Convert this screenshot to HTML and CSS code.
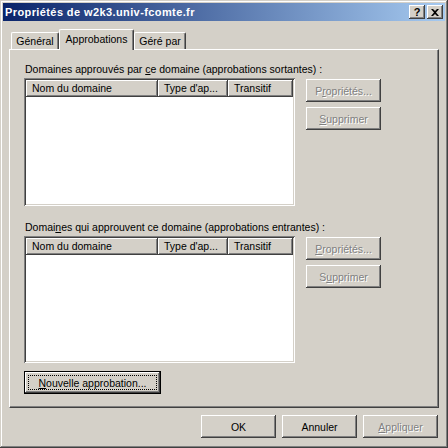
FILE: index.html
```html
<!DOCTYPE html>
<html lang="fr">
<head>
  <meta charset="UTF-8">
  <title>Propriétés de w2k3.univ-fcomte.fr</title>
  <link rel="stylesheet" href="styles.css">
</head>
<body>
  <div class="window">
    <div class="titlebar">
      <span class="title">Propriétés de w2k3.univ-fcomte.fr</span>
      <div class="caption-buttons">
        <div class="cap-btn help">?</div>
        <div class="cap-btn close">
          <svg width="8" height="7" viewBox="0 0 8 7"><path d="M0 0h2l2 2 2-2h2L5 3.5 8 7H6L4 5 2 7H0l3-3.5z" fill="#000"/></svg>
        </div>
      </div>
    </div>

    <div class="body">
      <div class="tabs">
        <div class="tab t1">Général</div>
        <div class="tab t2 active">Approbations</div>
        <div class="tab t3">Géré par</div>
      </div>

      <div class="panel">
        <div class="label">Domaines approuvés par <u>c</u>e domaine (approbations sortantes) :</div>
        <div class="group">
          <div class="list">
            <div class="list-head">
              <div class="col c1">Nom du domaine</div>
              <div class="col c2">Type d'ap...</div>
              <div class="col c3">Transitif</div>
            </div>
          </div>
          <div class="side-buttons">
            <div class="btn disabled">P<u>r</u>opriétés...</div>
            <div class="btn disabled"><u>S</u>upprimer</div>
          </div>
        </div>

        <div class="label second">Domai<u>n</u>es qui approuvent ce domaine (approbations entrantes) :</div>
        <div class="group">
          <div class="list short">
            <div class="list-head">
              <div class="col c1">Nom du domaine</div>
              <div class="col c2">Type d'ap...</div>
              <div class="col c3">Transitif</div>
            </div>
          </div>
          <div class="side-buttons">
            <div class="btn disabled"><u>P</u>ropriétés...</div>
            <div class="btn disabled">S<u>u</u>pprimer</div>
          </div>
        </div>

        <div class="btn default wide"><span class="focus"><u>N</u>ouvelle approbation...</span></div>
      </div>

      <div class="footer">
        <div class="btn">OK</div>
        <div class="btn">Annuler</div>
        <div class="btn disabled"><u>A</u>ppliquer</div>
      </div>
    </div>
  </div>
</body>
</html>
```

FILE: styles.css
```css
body {
  margin: 0;
  font-family: "Liberation Sans", Arial, sans-serif;
  font-size: 10.5px;
  color: #000;
  background: #d4d0c8;
}
.window {
  width: 448px;
  height: 448px;
  box-sizing: border-box;
  padding: 3px;
  background: #d4d0c8;
  box-shadow: inset -1px -1px #404040, inset 1px 1px #d4d0c8, inset -2px -2px #808080, inset 2px 2px #fff;
}
.titlebar {
  height: 18px;
  display: flex;
  align-items: center;
  justify-content: space-between;
  padding: 0 2px;
  background: linear-gradient(to right, #0a246a, #a6caf0);
}
.title {
  color: #fff;
  font-weight: bold;
  font-size: 11px;
  letter-spacing: 0.4px;
}
.caption-buttons {
  display: flex;
  gap: 2px;
}
.cap-btn {
  width: 16px;
  height: 14px;
  box-sizing: border-box;
  display: flex;
  align-items: center;
  justify-content: center;
  background: #d4d0c8;
  font-weight: bold;
  font-size: 11px;
  box-shadow: inset -1px -1px #404040, inset 1px 1px #fff, inset -2px -2px #808080, inset 2px 2px #d4d0c8;
}
.body {
  padding: 0 6px;
}
.tabs {
  display: flex;
  align-items: flex-end;
  height: 20px;
  margin-top: 8px;
  padding-left: 2px;
}
.tab {
  height: 17px;
  box-sizing: border-box;
  display: flex;
  justify-content: center;
  padding-top: 2px;
  white-space: nowrap;
  border-top: 1px solid #fff;
  border-left: 1px solid #fff;
  border-right: 1px solid #404040;
  border-radius: 2px 2px 0 0;
  box-shadow: inset -1px 0 #808080;
}
.t1 { width: 48px; }
.t2 { width: 75px; }
.t3 { width: 52px; }
.tab.active {
  height: 21px;
  margin-bottom: -1px;
  padding-top: 3px;
  position: relative;
  background: #d4d0c8;
}
.panel {
  height: 359px;
  box-sizing: border-box;
  padding: 13px 14px 0 14px;
  border-top: 1px solid #fff;
  border-left: 1px solid #fff;
  border-right: 1px solid #404040;
  border-bottom: 1px solid #404040;
  box-shadow: inset -1px -1px #808080;
}
.label {
  height: 13px;
  line-height: 13px;
  margin-bottom: 2px;
  padding-left: 1px;
  white-space: nowrap;
}
.label.second {
  margin-top: 15px;
}
.group {
  display: flex;
  gap: 11px;
}
.list {
  width: 271px;
  height: 128px;
  box-sizing: border-box;
  padding: 2px;
  background: #fff;
  box-shadow: inset 1px 1px #808080, inset -1px -1px #fff, inset 2px 2px #404040, inset -2px -2px #d4d0c8;
}
.list.short {
  height: 127px;
}
.list-head {
  display: flex;
  height: 17px;
}
.col {
  box-sizing: border-box;
  padding: 2px 0 0 6px;
  white-space: nowrap;
  background: #d4d0c8;
  box-shadow: inset -1px -1px #404040, inset 1px 1px #fff, inset -2px -2px #808080;
}
.c1 { width: 132px; }
.c2 { width: 70px; }
.c3 { width: 65px; }
.side-buttons {
  display: flex;
  flex-direction: column;
  gap: 5px;
  padding-top: 1px;
}
.btn {
  width: 75px;
  height: 23px;
  box-sizing: border-box;
  display: flex;
  align-items: center;
  justify-content: center;
  white-space: nowrap;
  background: #d4d0c8;
  box-shadow: inset -1px -1px #404040, inset 1px 1px #fff, inset -2px -2px #808080, inset 2px 2px #d4d0c8;
}
.btn.disabled {
  color: #808080;
  text-shadow: 1px 1px #fff;
}
.btn.default {
  border: 1px solid #000;
  padding: 3px;
  margin-top: 8px;
}
.btn.wide {
  width: 137px;
}
.focus {
  flex: 1;
  height: 100%;
  box-sizing: border-box;
  border: 1px dotted #000;
  display: flex;
  align-items: center;
  justify-content: center;
}
.footer {
  display: flex;
  justify-content: flex-end;
  gap: 6px;
  margin-top: 7px;
  padding-right: 1px;
}
```
